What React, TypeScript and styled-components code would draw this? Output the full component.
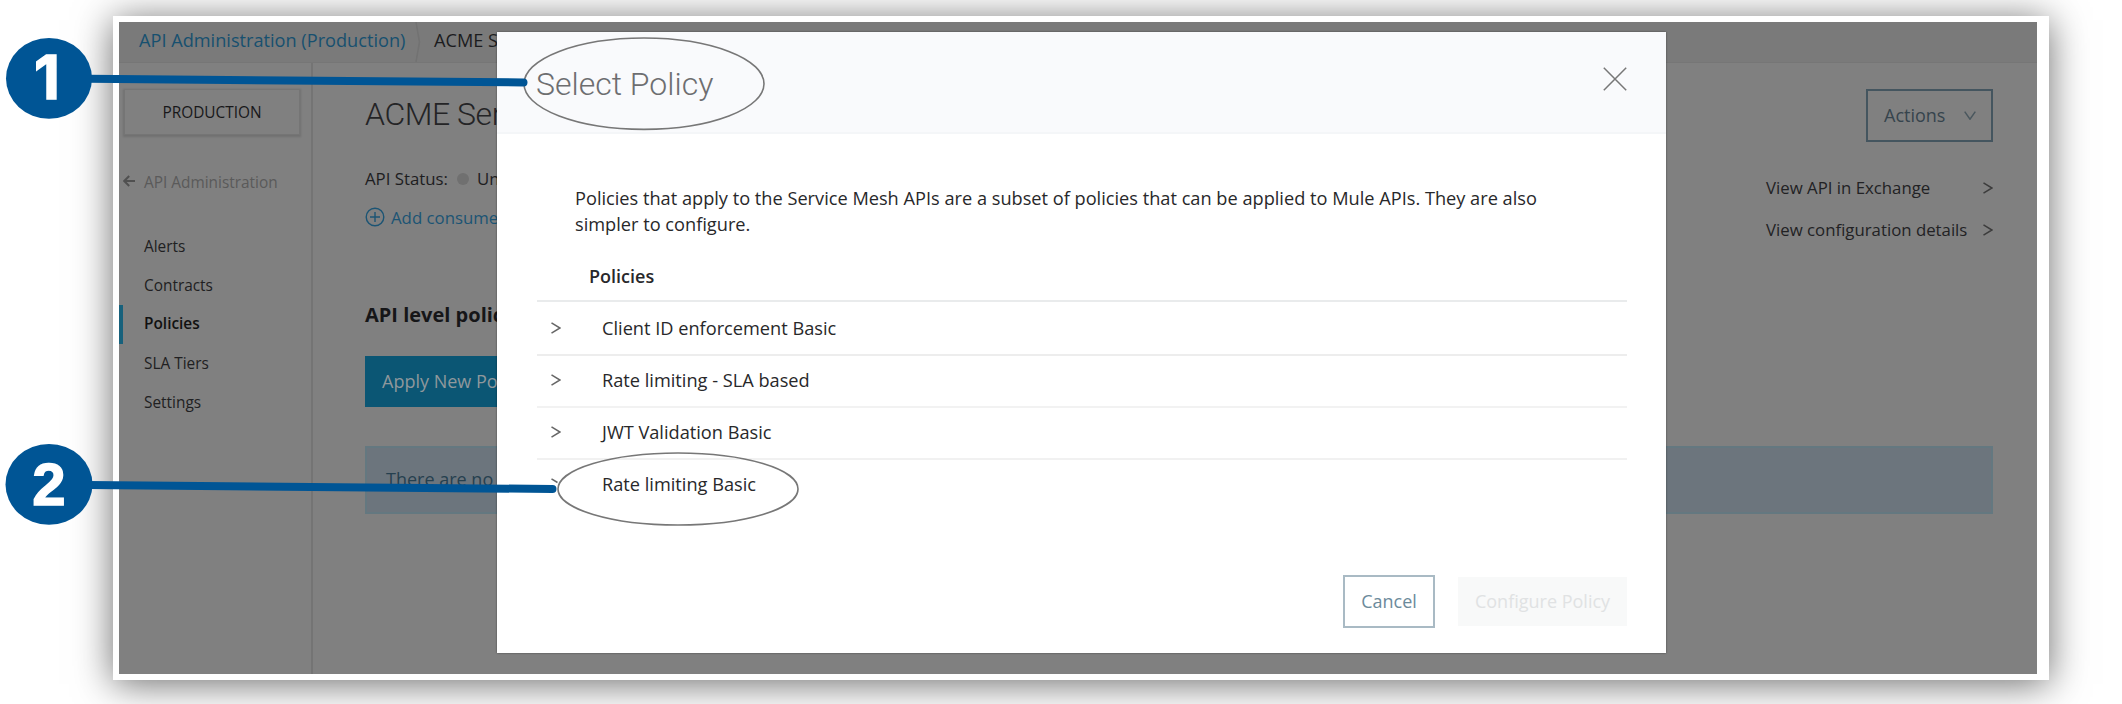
import React from "react";
import styled, { createGlobalStyle, css } from "styled-components";

const GlobalStyle = createGlobalStyle`
  *, *::before, *::after { box-sizing: border-box; }
  body {
    margin: 0;
    background: #fff;
    overflow: hidden;
    font-family: "Open Sans", "Noto Sans", sans-serif;
    color: #1d1d1f;
  }
`;

const Page = styled.div`
  position: relative;
  width: 2122px;
  height: 704px;
  padding: 16px 73px 24px 113px;
  overflow: hidden;
`;

const Frame = styled.div`
  height: 664px;
  padding: 6px 12px 6px 6px;
  background: #fff;
  box-shadow: 0 4px 36px rgba(0, 0, 0, 0.58);
`;

const Screen = styled.div`
  position: relative;
  height: 652px;
  display: flex;
  flex-direction: column;
  background: #808080;
  overflow: hidden;
  white-space: nowrap;
`;

const TopBar = styled.nav`
  display: flex;
  height: 41px;
  padding-left: 20px;
  background: #7a7a7a;
  border-bottom: 1px solid #767676;
  font-size: 18.16px;
  line-height: 36px;
`;

const CrumbLink = styled.a`
  width: 276px;
  color: #17506f;
`;

const CrumbDivider = styled.svg`
  width: 6px;
  height: 40px;
  margin-right: 13px;
  fill: none;
  stroke: #727272;
  stroke-width: 1.5;
`;

const Crumb = styled.span`
  color: #1c1c1e;
`;

const Body = styled.div`
  display: flex;
  flex: 1;
`;

const Sidebar = styled.aside`
  width: 194px;
  padding-top: 26px;
  border-right: 2px solid #747474;
  font-size: 15.4px;
`;

const EnvButton = styled.div`
  width: 176px;
  height: 46px;
  margin-left: 5px;
  border: 1px solid #757575;
  box-shadow: 0 1px 2px 1px rgba(0, 0, 0, 0.13);
  line-height: 46px;
  text-align: center;
  color: #18181a;
`;

const BackLink = styled.div`
  display: flex;
  align-items: center;
  gap: 9px;
  height: 24px;
  margin: 35px 0 33px 4px;
  color: #5a5a5a;

  svg {
    width: 12px;
    height: 12px;
    margin-top: -3px;
    fill: none;
    stroke: #505050;
    stroke-width: 2;
  }
`;

const NavItem = styled.div<{ $active?: boolean }>`
  height: 39px;
  padding-left: 25px;
  line-height: 39px;
  color: #202022;
  ${(p) =>
    p.$active &&
    css`
      padding-left: 21px;
      border-left: 4px solid #17617c;
      line-height: 37px;
      font-weight: 600;
      color: #111;
    `}
`;

const Main = styled.main`
  flex: 1;
  padding: 26px 44px 0 52px;
`;

const TitleRow = styled.div`
  display: flex;
  justify-content: space-between;
  height: 53px;
`;

const ApiTitle = styled.h1`
  margin: 0;
  font: 300 32px/51px Roboto, sans-serif;
  letter-spacing: -0.45px;
  color: #242426;
`;

const ActionsButton = styled.div`
  display: flex;
  align-items: center;
  justify-content: space-between;
  width: 127px;
  padding: 0 15px 1px 16px;
  border: 2px solid #44555f;
  font-size: 18px;
  color: #36444d;

  svg {
    width: 12px;
    height: 9px;
    margin-top: 1px;
    fill: none;
    stroke: #4a575e;
    stroke-width: 1.5;
  }
`;

const InfoRow = styled.div`
  display: flex;
  justify-content: space-between;
  height: 157px;
  font-size: 16.8px;
  line-height: 26px;
`;

const InfoColumn = styled.div`
  display: flex;
  flex-direction: column;
  gap: 13px;
  padding-top: 24px;
`;

const Status = styled.div`
  display: flex;
  align-items: center;
`;

const StatusDot = styled.span`
  width: 12px;
  height: 12px;
  margin: 0 8px 0 9px;
  border-radius: 50%;
  background: #707070;
`;

const AddLink = styled.div`
  display: flex;
  align-items: center;
  gap: 6px;
  color: #1b5474;

  svg {
    width: 20px;
    height: 20px;
    margin-top: -2px;
    fill: none;
    stroke: #1b5474;
    stroke-width: 1.4;
  }
`;

const LinkColumn = styled.div`
  display: flex;
  flex-direction: column;
  gap: 16px;
  width: 227px;
  padding-top: 33px;
`;

const SideLink = styled.div`
  display: flex;
  align-items: center;
  justify-content: space-between;
  color: #222224;
`;

const Chevron = styled.svg`
  width: 10px;
  height: 12px;
  fill: none;
  stroke: #3c3c3c;
  stroke-width: 1.5;
`;

const SectionTitle = styled.h2`
  margin: 0 0 27px;
  font-size: 20px;
  font-weight: 700;
  line-height: 31px;
  height: 30px;
  color: #161618;
`;

const ApplyButton = styled.div`
  width: 180px;
  height: 51px;
  padding-left: 17px;
  background: #0b5674;
  font-size: 18px;
  line-height: 50px;
  color: #8f989c;
`;

const Notice = styled.div`
  height: 68px;
  margin-top: 39px;
  padding-left: 19px;
  background: #6c757d;
  border: 2px solid #647880;
  font-size: 18px;
  line-height: 62px;
  color: #26404f;
`;

const Modal = styled.section`
  position: absolute;
  left: 378px;
  top: 10px;
  width: 1169px;
  height: 621px;
  background: #fff;
  box-shadow: 0 0 2px rgba(0, 0, 0, 0.45);
`;

const ModalHeader = styled.header`
  display: flex;
  justify-content: space-between;
  height: 102px;
  padding: 33px 39px 0 39px;
  background: #f9fafc;
  border-bottom: 2px solid #f4f6f8;
`;

const ModalTitle = styled.h2`
  margin: -1px 0 0;
  font: 300 32px/40px Roboto, sans-serif;
  color: #6d6e70;
`;

const CloseIcon = styled.svg`
  width: 24px;
  height: 24px;
  margin-top: 2px;
  stroke: #777;
  stroke-width: 1.5;
`;

const ModalBody = styled.div`
  padding: 51px 39px 0 40px;
  font-size: 18.2px;
  color: #28282a;
`;

const Intro = styled.p`
  width: 975px;
  margin: 0 0 15px 38px;
  line-height: 26px;
  white-space: normal;
`;

const ListHead = styled.div`
  height: 50px;
  padding-left: 52px;
  border-bottom: 2px solid #e9ebec;
  font-size: 18px;
  font-weight: 600;
  line-height: 48px;
`;

const PolicyRow = styled.div<{ $rule?: string }>`
  display: flex;
  align-items: center;
  gap: 41px;
  height: 52px;
  padding-left: 14px;
  line-height: 52px;
  box-shadow: inset 0 2px ${(p) => p.$rule || "transparent"};

  svg {
    stroke: #666;
  }
`;

const ModalFooter = styled.footer`
  display: flex;
  align-items: center;
  justify-content: flex-end;
  gap: 23px;
  margin-top: 65px;
`;

const FooterButton = styled.div<{ $disabled?: boolean }>`
  width: ${(p) => (p.$disabled ? 169 : 92)}px;
  height: ${(p) => (p.$disabled ? 49 : 53)}px;
  border: ${(p) => (p.$disabled ? "none" : "2px solid #a9bac4")};
  background: ${(p) => (p.$disabled ? "#f8f9f9" : "#fff")};
  color: ${(p) => (p.$disabled ? "#e0e2e3" : "#6c8a9b")};
  font-size: 18px;
  line-height: 49px;
  text-align: center;
`;

const Callouts = styled.svg`
  position: absolute;
  left: 0;
  top: 0;

  .ring {
    fill: none;
    stroke: #777;
    stroke-width: 1.6;
  }
  .lead {
    stroke: #005595;
    stroke-width: 8;
    stroke-linecap: round;
  }
  .badge {
    fill: #005595;
  }
`;

const BadgeNumber = styled.text<{ $font: string }>`
  font: 700 60px ${(p) => p.$font}, Arial, sans-serif;
  fill: #fff;
  stroke: #fff;
  stroke-width: 1.4;
  text-anchor: middle;
`;

const RightChevron = ({ d = "M0.5 0.8 L9 6 L0.5 11.2" }: { d?: string }) => (
  <Chevron viewBox="0 0 10 12">
    <path d={d} />
  </Chevron>
);

const navItems = ["Alerts", "Contracts", "Policies", "SLA Tiers", "Settings"];

const policies = [
  { name: "Client ID enforcement Basic" },
  { name: "Rate limiting - SLA based", rule: "#ededed" },
  { name: "JWT Validation Basic", rule: "#f2f2f2" },
  { name: "Rate limiting Basic", rule: "#f1f1f1", chevron: "M0.5 0.8 L6.5 4.5" },
];

export default function App() {
  return (
    <Page>
      <GlobalStyle />
      <Frame>
        <Screen>
          <TopBar>
            <CrumbLink>API Administration (Production)</CrumbLink>
            <CrumbDivider viewBox="0 0 6 40">
              <path d="M1 0 L4.5 20 L1 40" />
            </CrumbDivider>
            <Crumb>ACME S</Crumb>
          </TopBar>
          <Body>
            <Sidebar>
              <EnvButton>PRODUCTION</EnvButton>
              <BackLink>
                <svg viewBox="0 0 12 12">
                  <path d="M12 6 H1.5 M6.2 1 L1.2 6 L6.2 11" />
                </svg>
                API Administration
              </BackLink>
              {navItems.map((item) => (
                <NavItem key={item} $active={item === "Policies"}>
                  {item}
                </NavItem>
              ))}
            </Sidebar>
            <Main>
              <TitleRow>
                <ApiTitle>ACME Ser</ApiTitle>
                <ActionsButton>
                  Actions
                  <svg viewBox="0 0 12 9">
                    <path d="M0.7 0.6 L6 8.2 L11.3 0.6" />
                  </svg>
                </ActionsButton>
              </TitleRow>
              <InfoRow>
                <InfoColumn>
                  <Status>
                    API Status: <StatusDot /> Un
                  </Status>
                  <AddLink>
                    <svg viewBox="0 0 20 20">
                      <circle cx="10" cy="10" r="8.8" />
                      <path d="M10 5 V15 M5 10 H15" />
                    </svg>
                    Add consume
                  </AddLink>
                </InfoColumn>
                <LinkColumn>
                  <SideLink>
                    View API in Exchange <RightChevron />
                  </SideLink>
                  <SideLink>
                    View configuration details <RightChevron />
                  </SideLink>
                </LinkColumn>
              </InfoRow>
              <SectionTitle>API level polic</SectionTitle>
              <ApplyButton>Apply New Po</ApplyButton>
              <Notice>There are no</Notice>
            </Main>
          </Body>
          <Modal>
            <ModalHeader>
              <ModalTitle>Select Policy</ModalTitle>
              <CloseIcon viewBox="0 0 24 24">
                <path d="M0.8 0.8 L23.2 23.2 M23.2 0.8 L0.8 23.2" />
              </CloseIcon>
            </ModalHeader>
            <ModalBody>
              <Intro>
                Policies that apply to the Service Mesh APIs are a subset of policies that can be
                applied to Mule APIs. They are also simpler to configure.
              </Intro>
              <ListHead>Policies</ListHead>
              {policies.map((p) => (
                <PolicyRow key={p.name} $rule={p.rule}>
                  <RightChevron d={p.chevron} />
                  {p.name}
                </PolicyRow>
              ))}
              <ModalFooter>
                <FooterButton>Cancel</FooterButton>
                <FooterButton $disabled>Configure Policy</FooterButton>
              </ModalFooter>
            </ModalBody>
          </Modal>
        </Screen>
      </Frame>
      <Callouts width="2122" height="704" viewBox="0 0 2122 704">
        <ellipse className="ring" cx="644" cy="83.7" rx="120" ry="45.7" />
        <ellipse className="ring" cx="678" cy="489" rx="120" ry="36" />
        <path className="lead" d="M88 78.8 L523.5 82.4" />
        <path className="lead" d="M88 485 L552.5 489" />
        <ellipse className="badge" cx="49" cy="78.4" rx="43" ry="40.4" />
        <ellipse className="badge" cx="49" cy="484.4" rx="43.5" ry="40.4" />
        <BadgeNumber $font="Inter" x="47" y="98.5">1</BadgeNumber>
        <BadgeNumber $font='"Liberation Sans"' x="49" y="504.5">2</BadgeNumber>
      </Callouts>
    </Page>
  );
}
